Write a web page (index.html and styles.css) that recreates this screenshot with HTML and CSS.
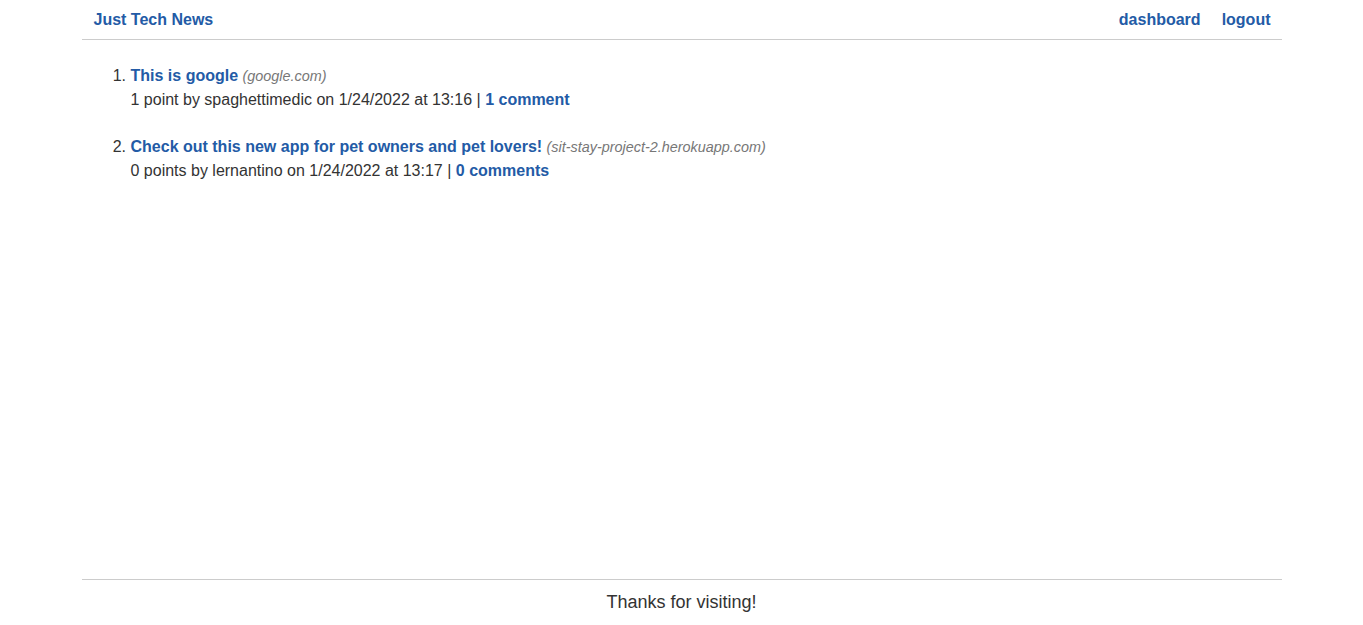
FILE: index.html
```html
<!DOCTYPE html>
<html lang="en">
<head>
<meta charset="utf-8">
<title>Just Tech News</title>
<link rel="stylesheet" href="styles.css">
</head>
<body>
<div class="wrapper">
  <header class="site-header">
    <a class="brand" href="#">Just Tech News</a>
    <nav class="nav">
      <a href="#">dashboard</a>
      <a href="#">logout</a>
    </nav>
  </header>
  <main class="content">
    <ol class="post-list">
      <li class="post">
        <div><a class="post-title" href="#">This is google</a> <span class="domain">(google.com)</span></div>
        <div class="meta">1 point by spaghettimedic on 1/24/2022 at 13:16 | <a href="#">1 comment</a></div>
      </li>
      <li class="post">
        <div><a class="post-title" href="#">Check out this new app for pet owners and pet lovers!</a> <span class="domain">(sit-stay-project-2.herokuapp.com)</span></div>
        <div class="meta">0 points by lernantino on 1/24/2022 at 13:17 | <a href="#">0 comments</a></div>
      </li>
    </ol>
  </main>
  <footer class="site-footer">Thanks for visiting!</footer>
</div>
</body>
</html>
```
FILE: styles.css
```css
* { box-sizing: border-box; }
html, body { margin: 0; padding: 0; }
body {
  font-family: "Liberation Sans", Arial, sans-serif;
  font-size: 16px;
  color: #333;
  background: #fff;
}
a { color: #235ba6; font-weight: bold; text-decoration: none; }
.wrapper {
  width: 1200px;
  margin: 0 auto;
  min-height: 100vh;
  display: flex;
  flex-direction: column;
}
.site-header {
  display: flex;
  justify-content: space-between;
  align-items: center;
  padding: 10px 11px 10px 12px;
  line-height: 19px;
  border-bottom: 1px solid #ccc;
}
.nav { display: flex; gap: 21px; }
.content { flex: 1; padding-top: 24px; }
.post-list { margin: 0; padding-left: 49px; }
.post { line-height: 24px; margin-bottom: 23px; }
.domain { font-style: italic; font-size: 14.4px; color: #777; }
.site-footer {
  border-top: 1px solid #ccc;
  text-align: center;
  font-size: 18px;
  line-height: 23px;
  padding: 11px 0;
}
```
